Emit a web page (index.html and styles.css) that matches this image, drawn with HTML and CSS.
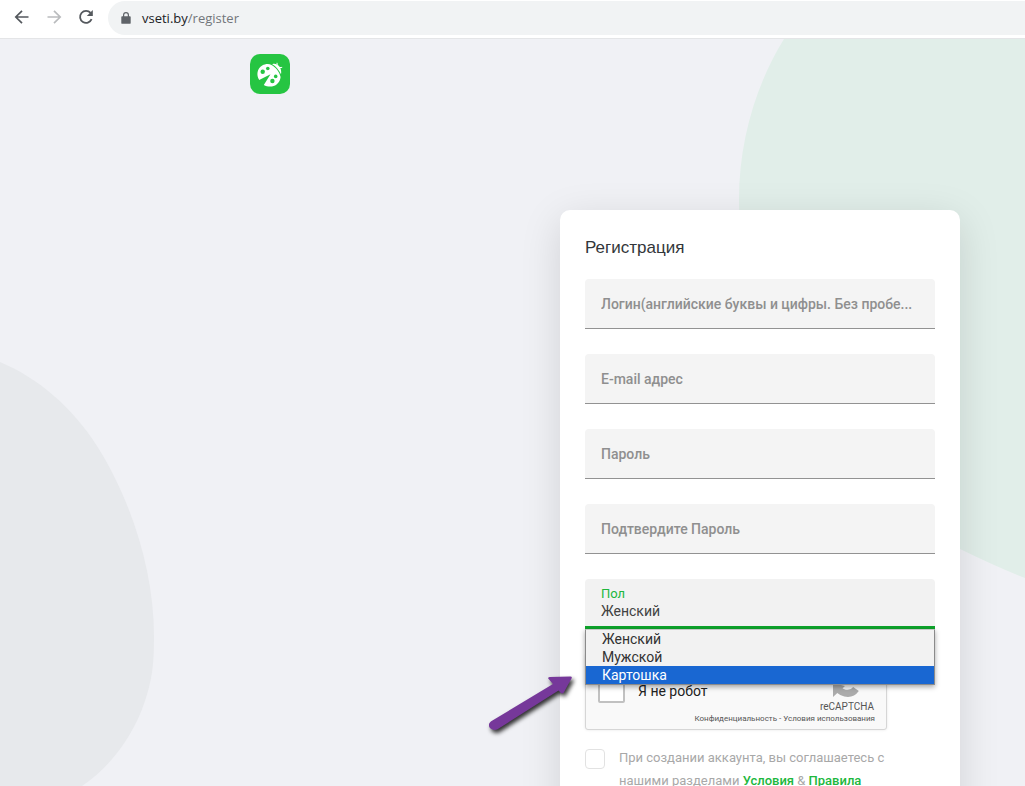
FILE: index.html
```html
<!DOCTYPE html>
<html lang="ru">
<head>
<meta charset="utf-8">
<title>Регистрация</title>
<link rel="stylesheet" href="styles.css">
</head>
<body>
<header class="toolbar">
  <button class="nav" type="button" aria-label="Назад">
    <svg viewBox="0 0 16 16" width="16" height="16"><path d="M14.500 8H2M8 1.800 1.800 8 8 14.200" fill="none" stroke="currentColor" stroke-width="1.700"/></svg>
  </button>
  <button class="nav nav-off" type="button" aria-label="Вперёд" disabled>
    <svg viewBox="0 0 16 16" width="16" height="16"><path d="M1.500 8H14M8 1.800 14.200 8 8 14.200" fill="none" stroke="currentColor" stroke-width="1.700"/></svg>
  </button>
  <button class="nav" type="button" aria-label="Обновить">
    <svg viewBox="0 0 16 16" width="16" height="16"><path d="M13.600 10.200A6 6 0 1 1 12.600 3.900" fill="none" stroke="currentColor" stroke-width="1.800"/><path d="M14.800 1v6H8.800z" fill="currentColor"/></svg>
  </button>
  <div class="address">
    <svg viewBox="0 0 10 12" width="10" height="12"><path d="M1.200 4.200h7.600q.9 0 .9.900v5.800q0 .9-.9.900H1.200q-.9 0-.9-.9V5.100q0-.9.900-.9z" fill="#5f6368"/><path d="M2.600 5V3a2.400 2.400 0 0 1 4.800 0v2" fill="none" stroke="#5f6368" stroke-width="1.200"/></svg>
    <span class="url"><span class="host">vseti.by</span>/register</span>
  </div>
</header>
<main class="page">
  <svg class="blob blob-green" viewBox="0 0 286 540" width="286" height="540" aria-hidden="true"><path d="M45 0C17 45 0 102 0 161C0 265 35 375 105 440C140 473 180 492 221 510Q260 529 286 539V0Z" fill="#e1eee9"/></svg>
  <svg class="blob blob-gray" viewBox="0 0 155 425" width="155" height="425" aria-hidden="true"><path d="M0 1C38 17 72 46 97 85C130 137 154 208 154 275C154 305 152 318 145 340C133 376 110 406 82 425H0Z" fill="#e7e9ec"/></svg>
  <a class="logo" href="#" aria-label="Главная">
    <svg viewBox="0 0 40 40" width="40" height="40">
      <rect width="40" height="40" rx="10" fill="#26c542"/>
      <g fill="#fff">
        <path d="M20.500 20.200 9.200 26C6 21 7.200 14.500 12.200 11.500C15.500 9.600 19 9.500 21.500 11C26 13.500 29.500 18 30.600 23C30.200 28 26.500 31.800 22 32.400C19.500 32.800 16 32.300 13.800 31Z"/>
        <path d="M22.200 10.200C24.500 9.200 27.500 10.200 29.200 12.200C31 14.400 31.600 17.500 31 20.300C29 15.800 26 12.400 22.200 10.200Z"/>
      </g>
      <path d="M27.200 11.200 27 8.800M29 13.600l3.200-.2" stroke="#fff" stroke-width="1"/>
      <g fill="#26c542"><circle cx="17.800" cy="14.500" r="1.800"/><circle cx="12.700" cy="17.800" r="2.200"/><circle cx="25.700" cy="22.400" r="1.800"/><circle cx="22.400" cy="27" r="2.200"/></g>
    </svg>
  </a>
  <form class="card">
    <h1 class="title">Регистрация</h1>
    <input class="field" type="text" aria-label="Логин" placeholder="Логин(английские буквы и цифры. Без пробе...">
    <input class="field" type="email" aria-label="E-mail адрес" placeholder="E-mail адрес">
    <input class="field" type="password" aria-label="Пароль" placeholder="Пароль">
    <input class="field" type="password" aria-label="Подтвердите Пароль" placeholder="Подтвердите Пароль">
    <div class="field choice">
      <label class="choice-label" for="gender">Пол</label>
      <select class="choice-select" id="gender"><option>Женский</option></select>
      <ul class="menu" role="listbox" aria-label="Пол">
        <li class="option" role="option">Женский</li>
        <li class="option" role="option">Мужской</li>
        <li class="option option-active" role="option" aria-selected="true">Картошка</li>
      </ul>
      <svg class="pointer" viewBox="0 0 96 66" width="96" height="66" aria-hidden="true"><path d="M3 45.800 64 9 59.200 3.600Q59 2 61 2L81.500 1.600Q83.500 1.800 82.500 3.500L74.500 18Q72.500 19 71.500 17.500L69.500 15.400 8.500 54.300C2 57-4 50 3 45.800Z" fill="#76389a"/></svg>
    </div>
    <div class="captcha">
      <input class="captcha-box" type="checkbox" id="robot">
      <label class="captcha-label" for="robot">Я не робот</label>
      <div class="captcha-brand">
        <svg viewBox="0 0 32 32" width="32" height="32" aria-hidden="true"><path d="M6 16a10 10 0 0 1 18-6" fill="none" stroke="#b5b5b5" stroke-width="6"/><path d="M6 16a10.500 10 0 0 0 19 4" fill="none" stroke="#ababab" stroke-width="7"/><path d="M2 14v14l12-11z" fill="#ababab"/></svg>
        <span>reCAPTCHA</span>
      </div>
      <div class="captcha-links"><a href="#">Конфиденциальность</a> - <a href="#">Условия использования</a></div>
    </div>
    <div class="terms">
      <input class="terms-box" type="checkbox" id="terms">
      <label class="terms-text" for="terms">При создании аккаунта, вы соглашаетесь с нашими разделами <a href="#">Условия</a> &amp; <a href="#">Правила</a></label>
    </div>
  </form>
</main>
</body>
</html>
```
FILE: styles.css
```css
* { box-sizing: border-box; }

body {
  margin: 0;
  height: 100vh;
  overflow: hidden;
  display: flex;
  flex-direction: column;
  font-family: Roboto, "Noto Sans", sans-serif;
  background: #f0f1f5;
}

.toolbar {
  flex: none;
  display: flex;
  align-items: flex-start;
  gap: 16px;
  height: 39px;
  padding: 1px 0 0 14px;
  background: #fff;
  border-bottom: 1px solid #e4e5e7;
}

.nav {
  display: flex;
  align-items: center;
  width: 16px;
  height: 32px;
  padding: 0;
  border: 0;
  background: none;
  color: #54585d;
}

.nav-off { color: #babcbe; }

.address {
  flex: 1;
  display: flex;
  align-items: center;
  gap: 11px;
  height: 34px;
  margin-left: -2px;
  padding-left: 13px;
  border-radius: 17px 0 0 17px;
  background: #f1f3f4;
  font: 13px/20px "Open Sans", sans-serif;
  color: #72767a;
}

.host { color: #202124; }

.page {
  flex: 1;
  min-height: 0;
  position: relative;
  overflow: hidden;
  display: flex;
  align-items: flex-start;
  justify-content: space-between;
  padding: 15px 65px 0 250px;
}

.blob { position: absolute; }
.blob-green { top: 0; right: 0; }
.blob-gray { bottom: 0; left: 0; }

.logo {
  position: relative;
  display: flex;
}

.card {
  position: relative;
  display: flex;
  flex-direction: column;
  gap: 25px;
  width: 400px;
  margin-top: 156px;
  padding: 26px 25px 40px;
  border-radius: 10px;
  background: #fff;
  box-shadow: 0 10px 40px rgba(0, 0, 0, 0.13);
}

.title {
  margin: 0 0 -6px;
  font: 400 17px/24px "Liberation Sans", sans-serif;
  color: #32363a;
}

.field {
  width: 100%;
  height: 50px;
  padding: 0 16px;
  border: 0;
  border-bottom: 1px solid #929292;
  border-radius: 4px 4px 0 0;
  background: #f4f4f4;
  font: 500 14px/20px Roboto, "Noto Sans", sans-serif;
  color: #333;
}

.field::placeholder {
  color: #8f8f8f;
  opacity: 1;
}

.choice {
  position: relative;
  display: flex;
  flex-direction: column;
  padding-top: 6px;
  border-bottom: 3px solid #0ea32b;
  background: #f2f2f2;
}

.choice-label {
  font: 400 13px/17px Roboto, sans-serif;
  color: #20b73d;
}

.choice-select {
  appearance: none;
  height: 18px;
  padding: 0;
  border: 0;
  background: none;
  font: 400 14px/18px Roboto, sans-serif;
  color: #424242;
}

.menu {
  position: absolute;
  z-index: 2;
  top: 50px;
  left: 0;
  width: 100%;
  margin: 0;
  padding: 0;
  list-style: none;
  border: 1px solid #8b8b8b;
  border-top-color: #c8c8c8;
  background: #f2f2f2;
  box-shadow: 0 2px 5px rgba(0, 0, 0, 0.35);
}

.option {
  padding: 0 16px;
  font: 400 14px/18px Roboto, sans-serif;
  color: #333;
}

.option-active {
  background: #1967d2;
  color: #fff;
}

.pointer {
  position: absolute;
  z-index: 3;
  top: 96px;
  left: -96px;
  filter: drop-shadow(2px 3px 2px rgba(0, 0, 0, 0.8));
}

.captcha {
  position: relative;
  display: flex;
  align-items: center;
  width: 302px;
  height: 76px;
  padding: 0 12px 2px;
  border: 1px solid #d6d6d6;
  border-radius: 3px;
  background: #f9f9f9;
  box-shadow: 0 0 3px rgba(0, 0, 0, 0.1);
}

.captcha-box {
  appearance: none;
  width: 27px;
  height: 24px;
  margin: 0;
  border: 2px solid #c1c1c1;
  border-radius: 2px;
  background: #fff;
}

.captcha-label {
  margin-left: 13px;
  font-size: 14px;
  line-height: 20px;
  color: #222;
}

.captcha-brand {
  display: flex;
  flex-direction: column;
  align-items: center;
  margin-left: auto;
  font-size: 10px;
  line-height: 12px;
  color: #555;
}

.captcha-links {
  position: absolute;
  right: 11px;
  bottom: 5px;
  font-size: 8px;
  line-height: 10px;
  color: #555;
}

.captcha-links a {
  color: inherit;
  text-decoration: none;
}

.terms {
  display: flex;
  align-items: flex-start;
  gap: 14px;
  margin-top: -9px;
}

.terms-box {
  appearance: none;
  flex: none;
  width: 20px;
  height: 20px;
  margin: 3px 0 0;
  border: 1px solid #e2e2e2;
  border-radius: 4px;
  background: #fff;
}

.terms-text {
  padding-right: 40px;
  font-size: 13px;
  line-height: 23px;
  color: #a8a8a8;
}

.terms-text a {
  font-weight: 500;
  color: #20b73d;
  text-decoration: none;
}
```
